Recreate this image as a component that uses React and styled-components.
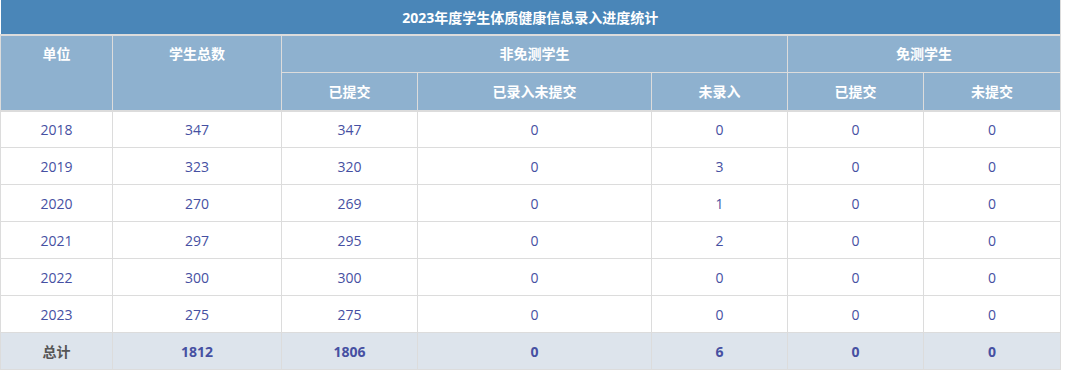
import styled, { createGlobalStyle } from 'styled-components'

const GlobalStyle = createGlobalStyle`
   body {
      margin: 0;
      background: #ffffff;
      font-family: "Open Sans", "Noto Sans CJK SC", sans-serif;
   }
`

const widths = [112, 169, 136, 234, 136, 136, 137]

const rows = [
   ['2018', 347, 347, 0, 0, 0, 0],
   ['2019', 323, 320, 0, 3, 0, 0],
   ['2020', 270, 269, 0, 1, 0, 0],
   ['2021', 297, 295, 0, 2, 0, 0],
   ['2022', 300, 300, 0, 0, 0, 0],
   ['2023', 275, 275, 0, 0, 0, 0],
]

const totals = [1812, 1806, 0, 6, 0, 0]

function App() {
   return (
      <>
         <GlobalStyle />
         <Table>
            <colgroup>
               {widths.map((w, i) => <col key={i} style={{ width: w }} />)}
            </colgroup>
            <thead>
               <tr>
                  <TitleCell colSpan={7}>2023年度学生体质健康信息录入进度统计</TitleCell>
               </tr>
               <tr>
                  <HeadCell rowSpan={2}>单位</HeadCell>
                  <HeadCell rowSpan={2}>学生总数</HeadCell>
                  <HeadCell colSpan={3}>非免测学生</HeadCell>
                  <HeadCell colSpan={2}>免测学生</HeadCell>
               </tr>
               <tr>
                  <HeadCell $bottom>已提交</HeadCell>
                  <HeadCell $bottom>已录入未提交</HeadCell>
                  <HeadCell $bottom>未录入</HeadCell>
                  <HeadCell $bottom>已提交</HeadCell>
                  <HeadCell $bottom>未提交</HeadCell>
               </tr>
            </thead>
            <Body>
               {rows.map((row) => (
                  <tr key={row[0]}>
                     {row.map((v, i) => <Cell key={i}>{v}</Cell>)}
                  </tr>
               ))}
               <TotalRow>
                  <Cell $label>总计</Cell>
                  {totals.map((v, i) => <Cell key={i}>{v}</Cell>)}
               </TotalRow>
            </Body>
         </Table>
      </>
   )
}

export default App

const Table = styled.table`
   width: 1061px;
   table-layout: fixed;
   border-collapse: collapse;
   border-right: 1px solid #dcdcdc;
`

const TitleCell = styled.th`
   height: 34px;
   padding: 0;
   background: #4a86b8;
   color: #ffffff;
   font-size: 14px;
   font-weight: bold;
   text-align: center;
   border-bottom: 2px solid #dcdcdc;
`

const HeadCell = styled.th`
   height: ${(p) => (p.$bottom ? '37px' : '36px')};
   padding: 0;
   line-height: ${(p) => (p.$bottom ? '37px' : '36px')};
   vertical-align: top;
   background: #8eb1cf;
   color: #ffffff;
   font-size: 14px;
   font-weight: bold;
   text-align: center;
   border: 1px solid #dcdcdc;
   border-top: none;
   border-bottom: ${(p) => (p.$bottom ? '2px' : '1px')} solid #dcdcdc;
   &[rowspan] {
      border-bottom-width: 2px;
   }
`

const Body = styled.tbody`
   tr:first-child td {
      height: 35px;
   }
`

const Cell = styled.td`
   height: 36px;
   padding: 0;
   text-align: center;
   font-size: 14px;
   color: ${(p) => (p.$label ? '#555555' : '#4650a2')};
   border: 1px solid #dcdcdc;
`

const TotalRow = styled.tr`
   background: #dde4ec;
   td {
      font-weight: bold;
   }
`
